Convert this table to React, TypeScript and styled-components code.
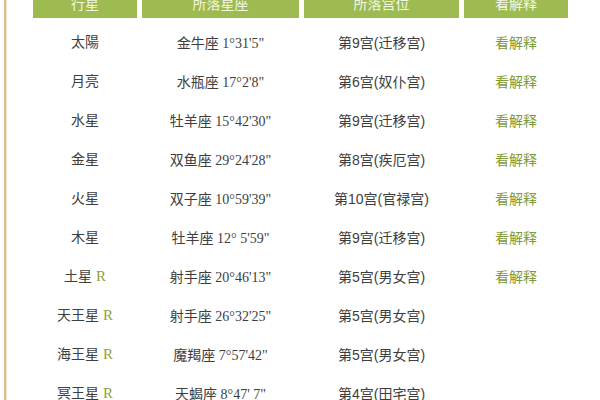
import React from "react";
import styled, { createGlobalStyle } from "styled-components";

const Global = createGlobalStyle`
  html, body { margin: 0; padding: 0; background: #ffffff; }
  body { font-family: "Liberation Sans", "Noto Sans CJK SC", sans-serif; }
`;

const Page = styled.div`
  width: 600px;
  height: 400px;
  overflow: hidden;
  display: flex;
  background: #fff;
`;

const Rule = styled.div`
  margin-left: 4px;
  width: 2px;
  background: #dcbd8a;
  box-shadow: 1px 0 0 #f3e6cf;
  flex: none;
`;

const Grid = styled.div`
  margin-left: 27px;
  margin-top: -12px;
  display: grid;
  grid-template-columns: 104px 157px 155px 104px;
  grid-template-rows: 34px;
  grid-auto-rows: 39px;
  column-gap: 5px;
  align-content: start;
`;

const Head = styled.div`
  height: 30px;
  align-self: start;
  background: #9dbb50;
  color: #f3f7e2;
  font-size: 14px;
  display: flex;
  align-items: center;
  justify-content: center;
  font-family: "Noto Sans CJK SC", sans-serif;
`;

const Cell = styled.div<{ $serif?: boolean; $link?: boolean }>`
  display: flex;
  align-items: center;
  justify-content: center;
  font-size: 14px;
  color: ${(p) => (p.$link ? "#7d9a34" : "#3e3e3e")};
  font-family: ${(p) =>
    p.$serif
      ? `"Liberation Serif", "Noto Sans CJK SC", serif`
      : `"Liberation Sans", "Noto Sans CJK SC", sans-serif`};
  white-space: pre;
`;

const Label = styled.span`
  line-height: 20px;
`;

const Retro = styled.span`
  color: #8f9f3c;
  font-family: "Liberation Serif", serif;
  font-size: 15px;
  margin-left: 4px;
`;

type Row = { planet: string; r?: boolean; sign: string; house: string; link?: boolean };

const rows: Row[] = [
  { planet: "太陽", sign: "金牛座 1°31'5\"", house: "第9宫(迁移宫)", link: true },
  { planet: "月亮", sign: "水瓶座 17°2'8\"", house: "第6宫(奴仆宫)", link: true },
  { planet: "水星", sign: "牡羊座 15°42'30\"", house: "第9宫(迁移宫)", link: true },
  { planet: "金星", sign: "双鱼座 29°24'28\"", house: "第8宫(疾厄宫)", link: true },
  { planet: "火星", sign: "双子座 10°59'39\"", house: "第10宫(官禄宫)", link: true },
  { planet: "木星", sign: "牡羊座 12° 5'59\"", house: "第9宫(迁移宫)", link: true },
  { planet: "土星", r: true, sign: "射手座 20°46'13\"", house: "第5宫(男女宫)", link: true },
  { planet: "天王星", r: true, sign: "射手座 26°32'25\"", house: "第5宫(男女宫)" },
  { planet: "海王星", r: true, sign: "魔羯座 7°57'42\"", house: "第5宫(男女宫)" },
  { planet: "冥王星", r: true, sign: "天蝎座 8°47' 7\"", house: "第4宫(田宅宫)" },
];

export default function App() {
  return (
    <Page>
      <Global />
      <Rule />
      <Grid>
        <Head>行星</Head>
        <Head>所落星座</Head>
        <Head>所落宫位</Head>
        <Head>看解释</Head>
        {rows.map((r, i) => (
          <React.Fragment key={i}>
            <Cell>
              <Label>
                {r.planet}
                {r.r && <Retro>R</Retro>}
              </Label>
            </Cell>
            <Cell $serif>{r.sign}</Cell>
            <Cell>{r.house}</Cell>
            <Cell $link>{r.link ? "看解释" : ""}</Cell>
          </React.Fragment>
        ))}
      </Grid>
    </Page>
  );
}
